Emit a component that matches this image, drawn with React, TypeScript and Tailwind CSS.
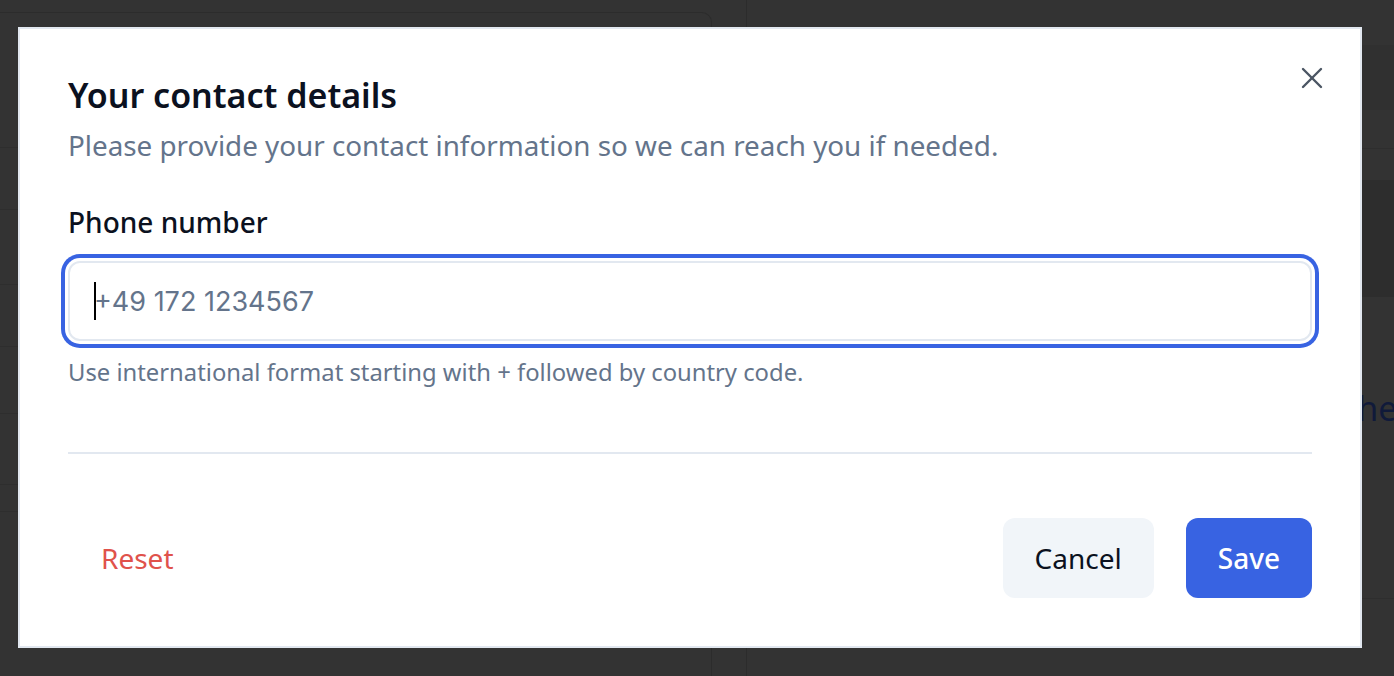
import { X } from 'lucide-react';

const font = { fontFamily: '"Noto Sans", "Open Sans", sans-serif' };

function Backdrop() {
  return (
    <div className="absolute inset-0 bg-[#333333]">
      {/* Left column of the page behind the dialog */}
      <div className="absolute left-0 top-[12px] w-[712px] h-[664px] border-t border-r border-[#2c2c2c] rounded-tr-[10px]">
        <div className="h-[135px] border-b border-[#2e2e2e]" />
        <div className="h-[62px] border-b border-[#2e2e2e]" />
        <div className="h-[75px] border-b border-[#2e2e2e]" />
        <div className="h-[62px] border-b border-[#2e2e2e]" />
        <div className="h-[67px] border-b border-[#2e2e2e]" />
        <div className="h-[71px] border-b border-[#2e2e2e]" />
        <div className="h-[27px] border-b border-[#2e2e2e]" />
      </div>
      <div className="absolute left-[746px] top-0 w-px h-full bg-[#2c2c2c]" />
      {/* Right column */}
      <div className="absolute left-[747px] right-0 top-[45px] h-[65px] bg-[#303030]" />
      <div className="absolute left-[747px] right-0 top-[148px] h-px bg-[#2e2e2e]" />
      <div className="absolute left-[747px] right-0 top-[180px] h-[117px] bg-[#2d2d2d]" />
      <div className="absolute left-[1345px] w-[49px] top-[388px] overflow-hidden">
        <span
          className="block whitespace-nowrap text-[34px] leading-[40px] text-[#101a3a]"
          style={font}
        >
          the
        </span>
      </div>
      <div className="absolute left-[747px] right-0 top-[598px] h-px bg-[#2e2e2e]" />
    </div>
  );
}

export default function App() {
  return (
    <div className="relative w-[1394px] h-[676px] overflow-hidden" style={font}>
      <Backdrop />

      {/* Dialog */}
      <div className="absolute left-[18px] top-[27px] w-[1344px] h-[621px] bg-white border-2 border-[#e2e8f0]">
        <div className="px-[48px] pt-[46px] pb-[48px] flex flex-col h-full">
          <button className="absolute right-[30px] top-[31px] text-[#4b5563]">
            <X size={36} strokeWidth={1.6} />
          </button>

          <h2 className="text-[34px] leading-[40px] font-semibold text-[#0b1120]">
            Your contact details
          </h2>
          <p className="mt-[12px] text-[27.8px] leading-[36px] text-[#64748b]">
            Please provide your contact information so we can reach you if needed.
          </p>

          <label className="mt-[41px] text-[28px] leading-[36px] font-medium text-[#0b1120]">
            Phone number
          </label>
          <div className="relative mt-[21px]">
            <input
              type="tel"
              placeholder="+49 172 1234567"
              className="block w-full h-[80px] rounded-[12px] border-2 border-[#e2e8f0] bg-white px-[24px] text-[27px] text-[#0b1120] placeholder:text-[#64748b] outline-none ring-[4px] ring-[#3863e2] ring-offset-[3px]"
              style={{ fontFamily: 'Inter, "Liberation Sans", sans-serif' }}
            />
            <span className="absolute left-[26px] top-[21px] w-[2px] h-[38px] bg-black" />
          </div>
          <p className="mt-[15px] text-[23.8px] leading-[32px] text-[#64748b]">
            Use international format starting with + followed by country code.
          </p>

          <div className="mt-[64px] h-[2px] bg-[#e2e8f0]" />

          <div className="mt-auto flex items-center justify-between">
            <button className="h-[80px] px-[33px] rounded-[12px] text-[28px] text-[#e0524b]">
              Reset
            </button>
            <div className="flex gap-[32px]">
              <button className="h-[80px] px-[32px] rounded-[12px] bg-[#f1f5f9] text-[28px] text-[#0b1120]">
                Cancel
              </button>
              <button className="h-[80px] px-[32px] rounded-[12px] bg-[#3863e2] text-[28px] font-medium text-white">
                Save
              </button>
            </div>
          </div>
        </div>
      </div>
    </div>
  );
}
